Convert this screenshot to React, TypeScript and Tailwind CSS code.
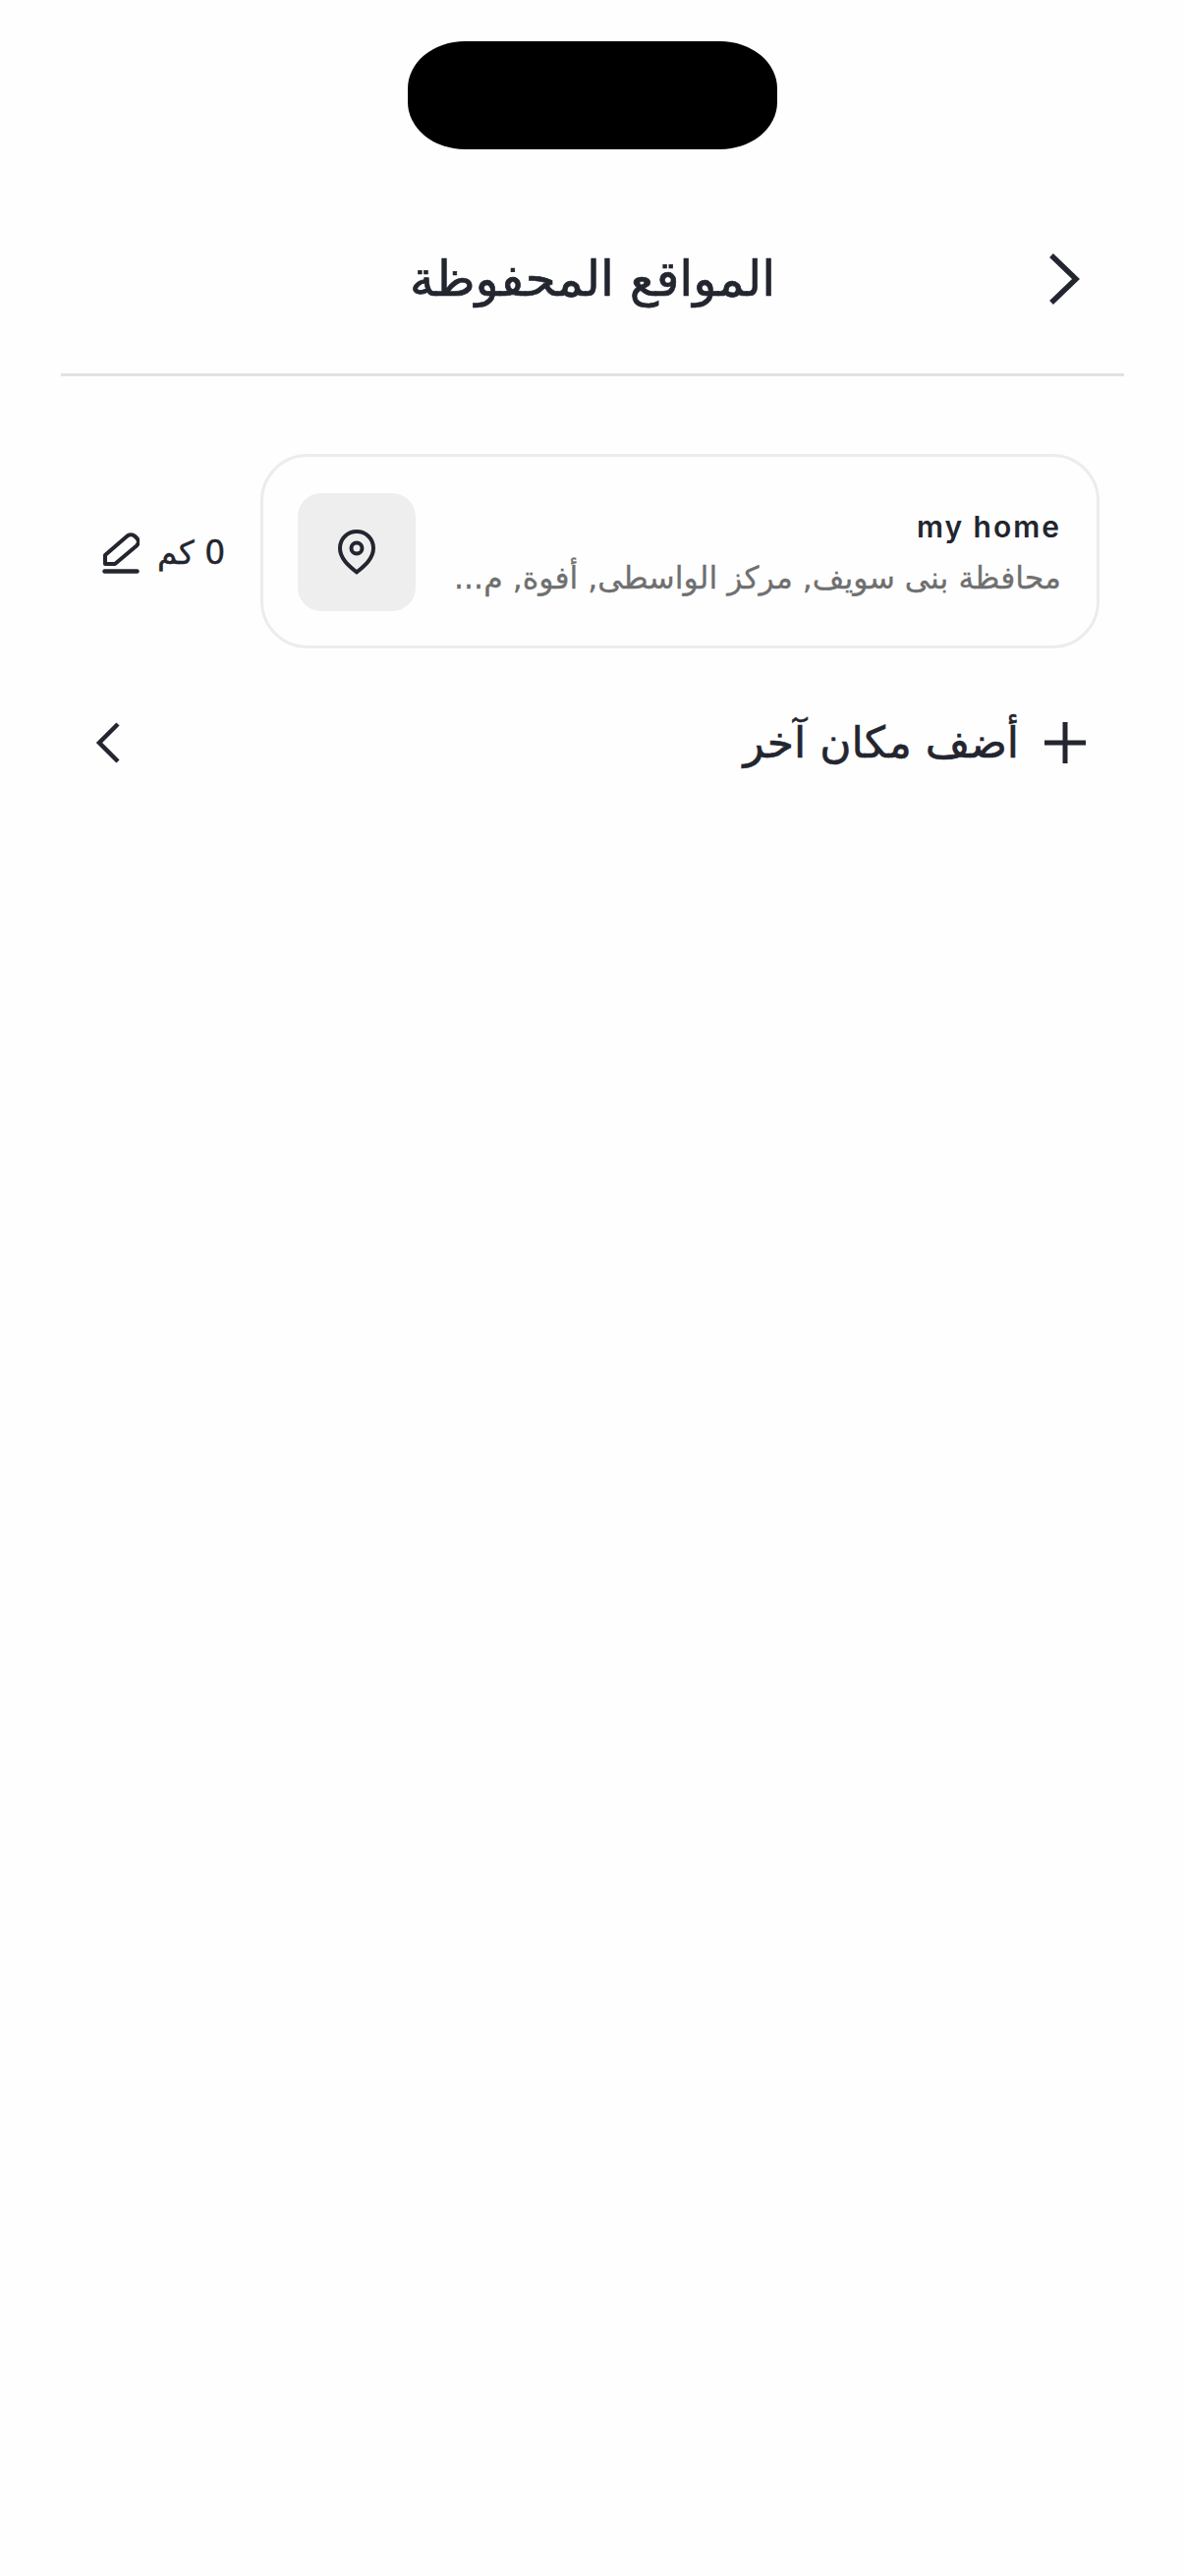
import React from 'react'

const PinIcon = () => (
  <svg width="38" height="46" viewBox="0 0 38 46" fill="none" stroke="#23252f" strokeWidth="4">
    <path d="M19 43.5 C12 37.5 2 30 2 19 C2 9 10 2 19 2 C28 2 36 9 36 19 C36 30 26 37.5 19 43.5 Z" strokeLinejoin="round" />
    <circle cx="19" cy="19" r="5.5" />
  </svg>
)

const EditIcon = () => (
  <svg width="38" height="42" viewBox="0 0 38 42" fill="none" stroke="#23252f" strokeWidth="4" strokeLinecap="round" strokeLinejoin="round">
    <path d="M3 32 V23 L25 4 C27.5 1.5 31 1.5 33.5 4 L35 5.5 C37.5 8 37.5 11 35 13.5 L13 32 Z" />
    <path d="M2.5 39.5 H35.5" strokeWidth="4.5" />
  </svg>
)

const ChevronBack = () => (
  <svg width="32" height="52" viewBox="0 0 32 52" fill="none" stroke="#23252f" strokeWidth="5.5">
    <path d="M3 2 L28 26 L3 50" />
  </svg>
)

const ChevronNext = () => (
  <svg width="26" height="42" viewBox="0 0 26 42" fill="none" stroke="#23252f" strokeWidth="4.5">
    <path d="M23 2 L4 21 L23 40" />
  </svg>
)

const PlusIcon = () => (
  <svg width="44" height="44" viewBox="0 0 44 44" fill="none" stroke="#23252f" strokeWidth="5">
    <path d="M22 1 V43 M1 22 H43" />
  </svg>
)

export default function App() {
  return (
    <div dir="rtl" className="min-h-[2622px] w-[1206px] bg-[#fefefe] pt-[42px] font-['DejaVu_Sans','Noto_Sans',sans-serif] text-[#23252f]">
      <div className="mx-auto h-[110px] w-[376px] rounded-[58px/48px] bg-black" />

      <div className="relative mx-[62px] mt-[82px] flex h-[149px] items-start justify-center border-b-[3px] border-[#e2e2e2] pt-[20px]">
        <span className="absolute right-[45px] top-[24px]">
          <ChevronBack />
        </span>
        <h1 className="text-[50px] leading-[60px] font-normal [-webkit-text-stroke:0.7px_#23252f]">المواقع المحفوظة</h1>
      </div>

      <div className="mt-[79px] ml-[104px] mr-[87px] flex items-center justify-between">
        <div className="flex h-[198px] w-[854px] items-center justify-between rounded-[48px] border-[3px] border-[#ececec] pt-[2px] pr-[36px] pl-[35px]">
          <div className="flex flex-col items-start gap-[8px]">
            <div dir="ltr" className="self-start font-['Inter',sans-serif] text-[30px] leading-[44px] font-semibold tracking-[2px]">my home</div>
            <div className="text-[31.5px] leading-[44px] text-[#6f6f6f] [-webkit-text-stroke:0.3px_#6f6f6f]">محافظة بنى سويف, مركز الواسطى, أفوة, م...</div>
          </div>
          <div className="flex h-[120px] w-[120px] items-center justify-center rounded-[24px] bg-[#eeeeee]">
            <PinIcon />
          </div>
        </div>
        <div className="flex items-center gap-[18px] pt-[3px]">
          <span className="text-[33px] leading-[44px] [-webkit-text-stroke:0.4px_#23252f]">0 كم</span>
          <EditIcon />
        </div>
      </div>

      <div className="mt-[56px] ml-[97px] mr-[100px] flex h-[80px] items-center justify-between">
        <div className="flex items-center gap-[25px]">
          <PlusIcon />
          <span className="text-[44px] leading-[60px] [-webkit-text-stroke:0.6px_#23252f]">أضف مكان آخر</span>
        </div>
        <ChevronNext />
      </div>
    </div>
  )
}
